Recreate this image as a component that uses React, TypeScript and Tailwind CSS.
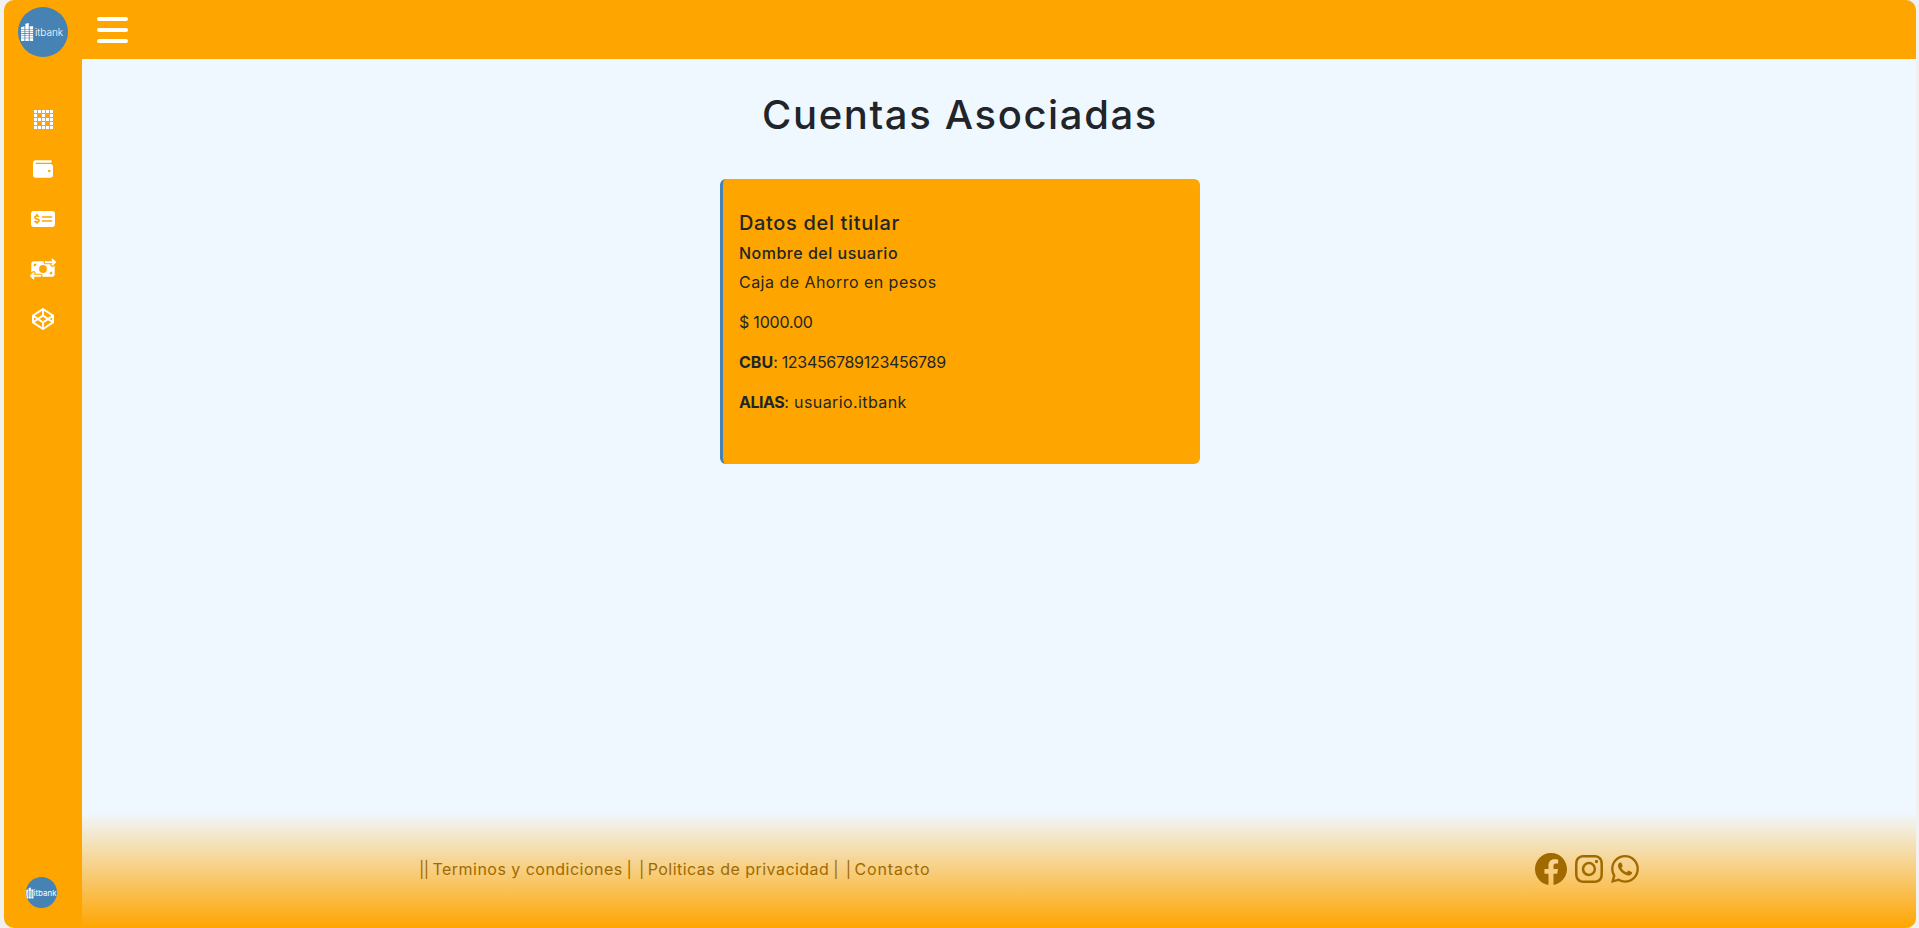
import { FaMoneyBillTransfer, FaMoneyCheckDollar, FaWallet, FaCodepen } from "react-icons/fa6";
import { BsFacebook, BsInstagram, BsWhatsapp } from "react-icons/bs";

function Dots() {
  const cells: [number, number][] = [];
  for (let y = 0; y < 5; y++) for (let x = 0; x < 5; x++) {
    if (!(x % 2 === 1 && y % 2 === 1)) cells.push([x, y]);
  }
  return (
    <svg width="19" height="19" viewBox="0 0 19 19" fill="#fff">
      {cells.map(([x, y]) => <rect key={`${x}-${y}`} x={x * 4} y={y * 4} width="3" height="3" />)}
    </svg>
  );
}

function Building({ w, h }: { w: number; h: number }) {
  return (
    <svg width={w} height={h} viewBox="0 0 15 21" fill="#fff" className="shrink-0">
      <path d="M0 5l4-1v17H0zM5 1l4-1v21H5zM10 4h4v17h-4z" />
      <path d="M0 7h15v.7H0zM0 9.5h15v.7H0zM0 12h15v.7H0zM0 14.5h15v.7H0zM0 17h15v.7H0z" fill="#4682b4" />
    </svg>
  );
}

function Logo({ big }: { big?: boolean }) {
  return big ? (
    <div className="flex h-[50px] w-[50px] items-center rounded-full bg-[#4682b4] pl-[3px]">
      <Building w={13} h={20} />
      <span className="ml-[1px] text-[10px] leading-none font-light text-white">itbank</span>
    </div>
  ) : (
    <div className="flex h-[31px] w-[31px] items-center overflow-hidden rounded-full bg-[#4682b4]">
      <Building w={8} h={12} />
      <span className="text-[8px] leading-none text-white">itbank</span>
    </div>
  );
}

function NavIcon({ children }: { children: React.ReactNode }) {
  return <div className="flex h-[50px] items-center justify-center text-white">{children}</div>;
}

export default function App() {
  return (
    <div className="h-[928px] w-full overflow-hidden bg-[#f1f1f1] pr-[3px] pl-1 font-['Inter',sans-serif] text-[#212529]">
      <div className="flex h-full flex-col overflow-hidden rounded-[10px] bg-[#ffa500]">
        <header className="flex h-[59px] shrink-0 items-center pl-[14px]">
          <div className="mt-[5px]"><Logo big /></div>
          <button className="ml-[29px] flex w-[31px] flex-col gap-[7px]">
            <span className="h-1 rounded-full bg-white" />
            <span className="h-1 rounded-full bg-white" />
            <span className="h-1 rounded-full bg-white" />
          </button>
        </header>
        <div className="flex min-h-0 flex-1">
          <aside className="flex w-[78px] shrink-0 flex-col items-center pt-[35px] pb-[20px]">
            <NavIcon><Dots /></NavIcon>
            <NavIcon><FaWallet size={20} /></NavIcon>
            <NavIcon><FaMoneyCheckDollar size={24} /></NavIcon>
            <NavIcon><FaMoneyBillTransfer size={26} /></NavIcon>
            <NavIcon><FaCodepen size={22} /></NavIcon>
            <div className="mt-auto -translate-x-[2px]"><Logo /></div>
          </aside>
          <main className="flex min-w-0 flex-1 flex-col bg-[#f0f8ff]">
            <section className="flex flex-1 flex-col items-center pr-[78px]">
              <h1 className="mt-[26px] text-[40px] leading-[60px] font-medium tracking-[1.62px]">Cuentas Asociadas</h1>
              <div className="mt-[34px] h-[285px] w-[480px] rounded-[6px] border-l-[3px] border-[#4682b4] bg-[#ffa500] pt-[29px] pl-[16px]">
                <h2 className="text-[20px] leading-[30px] font-medium tracking-[0.65px]">Datos del titular</h2>
                <h3 className="mt-[3px] text-[16px] leading-[24px] font-medium tracking-[0.5px]">Nombre del usuario</h3>
                <p className="mt-[5px] text-[16px] leading-[24px] tracking-[0.47px]">Caja de Ahorro en pesos</p>
                <p className="mt-[16px] text-[16px] leading-[24px] tracking-[-0.2px]">$ 1000.00</p>
                <p className="mt-[16px] text-[16px] leading-[24px]"><b>CBU</b><span className="tracking-[-0.3px]">: 123456789123456789</span></p>
                <p className="mt-[16px] text-[16px] leading-[24px]"><b className="tracking-[-0.5px]">ALIAS</b><span className="tracking-[0.4px]">: usuario.itbank</span></p>
              </div>
            </section>
            <footer className="flex h-[116px] shrink-0 items-center bg-[linear-gradient(to_bottom,#f0f8ff,#ffa500)] pb-[2px] pl-[337px] text-[#a06a00]">
              <nav className="w-[1116px] text-[16px] leading-[24px] whitespace-pre">
                <span className="tracking-[-0.55px]">|| </span>
                <span className="tracking-[0.47px]">Terminos y condiciones</span>
                <span className="tracking-[-0.6px]"> |  | </span>
                <span className="tracking-[0.47px]">Politicas de privacidad</span>
                <span className="tracking-[-0.6px]"> |  | </span>
                <span className="tracking-[0.9px]">Contacto</span>
              </nav>
              <div className="flex items-center gap-[8px]">
                <BsFacebook size={32} />
                <BsInstagram size={28} />
                <BsWhatsapp size={28} />
              </div>
            </footer>
          </main>
        </div>
      </div>
    </div>
  );
}
